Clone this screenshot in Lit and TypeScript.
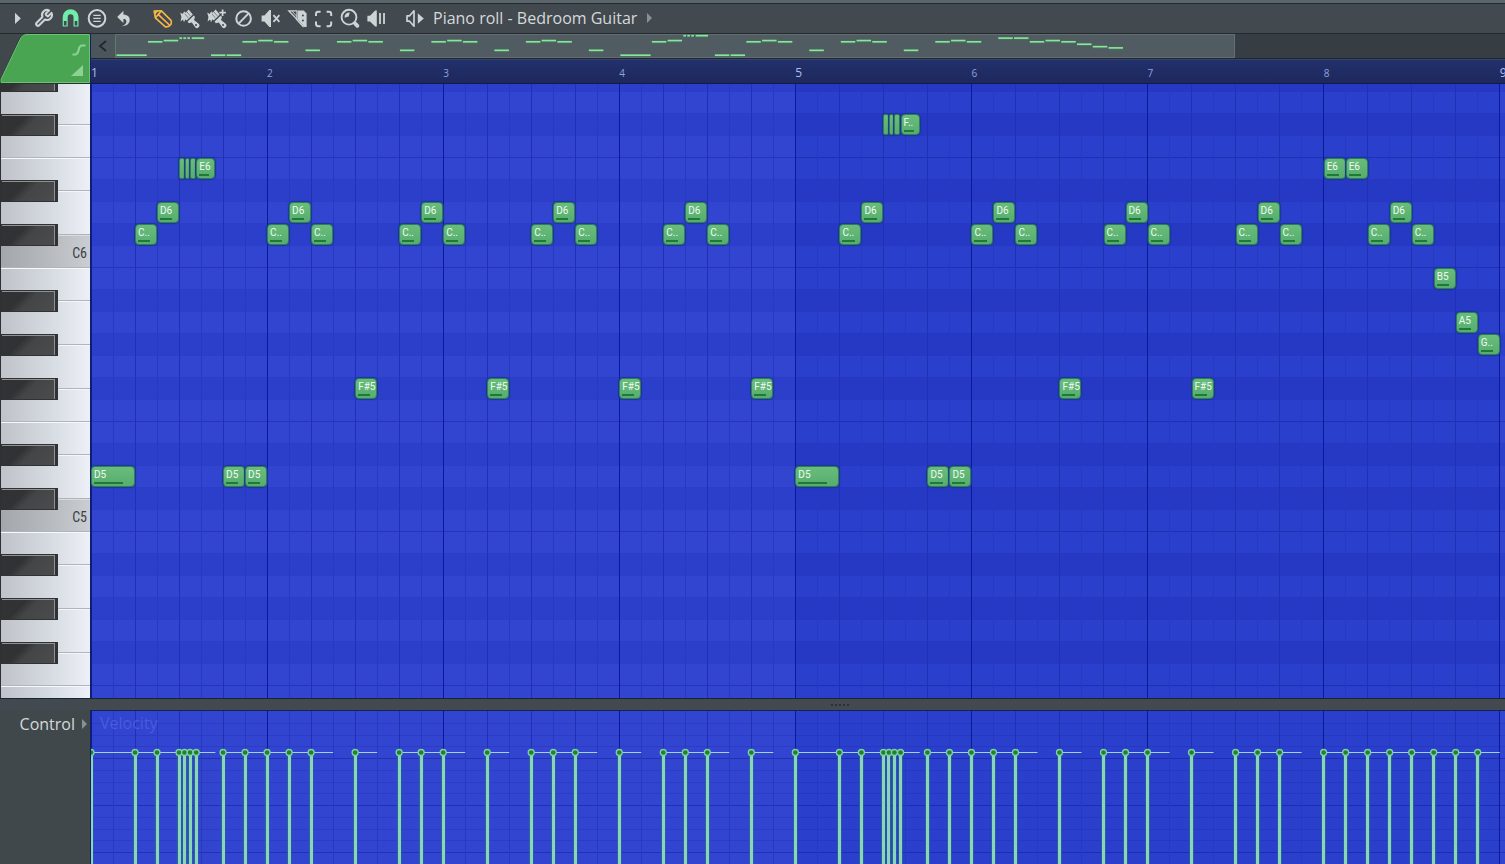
import { LitElement, html, svg, css, nothing } from "lit";
import { customElement, state } from "lit/decorators.js";

interface Note {
  pitch: number;
  at: number;
  len: number;
}

const NAMES = ["C", "C#", "D", "D#", "E", "F", "F#", "G", "G#", "A", "A#", "B"];
const BLACK = new Set([1, 3, 6, 8, 10]);
const TOP_PITCH = 80; // G#6
const BOTTOM_PITCH = 50;
const ROW = 22;
const VISIBLE_STEPS = 64.24;
const MAP_STEPS = 71;
const STEPS_PER_BAR = 8;

const P = { D5: 62, Fs5: 66, Gs5: 68, A5: 69, B5: 71, Cs6: 73, D6: 74, E6: 76, Fs6: 78 };

const n = (pitch: number, at: number, len = 1): Note => ({ pitch, at, len });
const arch = (at: number) => [n(P.Cs6, at), n(P.D6, at + 1), n(P.Cs6, at + 2)];
const strum = (pitch: number, at: number) => [
  n(pitch, at, 0.25),
  n(pitch, at + 0.25, 0.25),
  n(pitch, at + 0.5, 0.25),
  n(pitch, at + 0.78, 0.87),
];

const NOTES: Note[] = [
  n(P.D5, 0, 2), n(P.Cs6, 2), n(P.D6, 3), ...strum(P.E6, 4),
  n(P.D5, 6), n(P.D5, 7), ...arch(8), n(P.Fs5, 12), ...arch(14),
  n(P.Fs5, 18), ...arch(20), n(P.Fs5, 24), ...arch(26), n(P.Fs5, 30),
  n(P.D5, 32, 2), n(P.Cs6, 34), n(P.D6, 35), ...strum(P.Fs6, 36),
  n(P.D5, 38), n(P.D5, 39), ...arch(40), n(P.Fs5, 44), ...arch(46),
  n(P.Fs5, 50), ...arch(52), n(P.E6, 56), n(P.E6, 57), ...arch(58),
  n(P.B5, 61), n(P.A5, 62), n(P.Gs5, 63),
];

const pitchName = (p: number) => `${NAMES[p % 12]}${Math.floor(p / 12)}`;
const shortName = (p: number) => {
  const name = pitchName(p);
  return name === "F#5" || name.length < 3 ? name : `${name[0]}..`;
};
const pct = (steps: number) => `${(steps / VISIBLE_STEPS) * 100}%`;
const range = (from: number, to: number) =>
  Array.from({ length: to - from + 1 }, (_, i) => from + i);

const brush = svg`
  <path d="M4.2 5.4 L6.6 7 L8.2 4.6 L9.8 5.8 L12.6 2.6 L16.8 7.6 L10.6 13.6 L9.4 12.2 L8 15.2 L7 12.6 L4.6 14.4 L5.4 10 Z" fill="currentColor"/>
  <path d="M8.8 6.6 L12.2 10.8 M11 5 L14.2 8.8" stroke="#42494f" stroke-width=".6"/>
  <path d="M11.6 14.6 L17.8 8.6 L19 10 L18 13 L22.4 16.6 A2.5 2.5 0 0 1 19.4 20.6 L15.8 15.4 L12.8 16.2 Z" fill="currentColor"/>
  <circle cx="20" cy="18" r="1" fill="#42494f"/>`;

const ICONS = {
  play: svg`<path d="M12 5.7 L17.8 11.4 L12 17.1 Z" fill="currentColor"/>`,
  wrench: svg`<path transform="translate(3.7 1.3) scale(.83)" d="M14.7 6.3a1 1 0 0 0 0 1.4l1.6 1.6a1 1 0 0 0 1.4 0l3.77-3.77a6 6 0 0 1-7.94 7.94l-6.91 6.91a2.12 2.12 0 0 1-3-3l6.91-6.91a6 6 0 0 1 7.94-7.94l-3.76 3.76z" fill="none" stroke="currentColor" stroke-width="2.5" stroke-linejoin="round"/>`,
  magnet: svg`<path d="M8.2 14 V10.2 A5.4 5.4 0 0 1 19 10.2 V14" fill="none" stroke="currentColor" stroke-width="5"/>
    <path d="M6.3 14 V19 H10.1 V14 M17.1 14 V19 H20.9 V14" fill="none" stroke="currentColor" stroke-width="1.2"/>`,
  menu: svg`<circle cx="13" cy="11.4" r="8.3" fill="none" stroke="currentColor" stroke-width="2"/>
    <path d="M9.3 8.4H16.7M9.3 11.4H16.7M9.3 14.4H16.7" stroke="currentColor" stroke-width="1.4"/>`,
  undo: svg`<path d="M6.2 10 L12.4 3.8 V7.6 C17 7.8 19.4 10.8 18.6 14.2 C17.8 17.4 14.6 19 10.8 19.2 C14 17.8 15.6 16.2 15.4 14.2 C15.2 12.6 14 12 12.4 12.1 V16 Z" fill="currentColor"/>`,
  pencil: svg`<g fill="none" stroke="currentColor" stroke-width="1.7" stroke-linejoin="round"><path d="M5.2 4 L12.4 3.9 L22 13.4 Q23 15 21.8 17.6 Q20 20.2 16.4 19.8 L6.4 10.8 Z"/><path d="M6.4 10.8 L12.4 3.9 M9.4 7.6 L20.4 18"/></g><path d="M5 3.8 H9.6 L5.8 8 Z" fill="currentColor"/>`,
  brush,
  brushPlus: svg`${brush}<path d="M19.6 2.2V9.2M16.1 5.7H23.1" stroke="#42494f" stroke-width="3.6"/><path d="M19.6 2.4V9M16.3 5.7H22.9" stroke="currentColor" stroke-width="1.7"/>`,
  none: svg`<g fill="none" stroke="currentColor" stroke-width="2"><circle cx="13.6" cy="11.5" r="7.3"/><path d="M8.6 16.6 L18.6 6.4"/></g>`,
  mute: svg`<path d="M4.6 8.6 H7.4 L12.4 3 H14 V20 H12.4 L7.4 14.4 H4.6 Z" fill="currentColor"/><path d="M16.4 8.2 L22.4 14.8 M22.4 8.2 L16.4 14.8" stroke="currentColor" stroke-width="1.8"/>`,
  slice: svg`<path d="M4.8 3.8 H13 V12.4 Z M12 11.8 L19.6 20" fill="none" stroke="currentColor" stroke-width="1.3"/><path d="M8 4 L13 9.6" stroke="currentColor" stroke-width="1"/>
    <path d="M14 3.6 H19.8 L22.6 6.6 V20 H20.4 L14 12.8 Z" fill="currentColor"/><circle cx="18.9" cy="8.6" r="1" fill="#42494f"/><circle cx="18.9" cy="13.6" r="1" fill="#42494f"/>`,
  select: svg`<path d="M5 9 V7 Q5 4.8 7.2 4.8 H9.6 M15.6 4.8 H18 Q20.2 4.8 20.2 7 V9 M20.2 14.4 V16.8 Q20.2 19.2 18 19.2 H15.6 M9.6 19.2 H7.2 Q5 19.2 5 16.8 V14.4" fill="none" stroke="currentColor" stroke-width="2"/>`,
  zoom: svg`<circle cx="11" cy="10.2" r="7.4" fill="none" stroke="currentColor" stroke-width="1.9"/><path d="M6.6 10.8 A4.8 4.8 0 0 1 11.8 5.4 L10.6 9.6 Z" fill="currentColor"/><path d="M17 16.4 L19.4 18.8" stroke="currentColor" stroke-width="3.8" stroke-linecap="round"/>`,
  playback: svg`<path d="M2.4 8.8 H5 L10.2 3.6 H11.8 V19.6 H10.2 L5 14.4 H2.4 Z" fill="currentColor"/><path d="M15 6 V17 M19 6 V17" stroke="currentColor" stroke-width="1.8"/>`,
  target: svg`<path d="M6 8.8 H8.6 L13 3.8 V19.2 L8.6 14.2 H6 Z" fill="none" stroke="currentColor" stroke-width="1.7" stroke-linejoin="round"/><path d="M16.8 6.2 L22.8 11.5 L16.8 16.8 Z" fill="currentColor"/>`,
};

type IconName = keyof typeof ICONS;

const MENU_TOOLS: [IconName, string][] = [
  ["play", "Piano roll options"], ["wrench", "Tools"], ["magnet", "Snap"],
  ["menu", "Stamp"], ["undo", "Undo"],
];
const EDIT_TOOLS: [IconName, string][] = [
  ["pencil", "Draw"], ["brush", "Paint"], ["brushPlus", "Paint in drum mode"],
  ["none", "Delete"], ["mute", "Mute"], ["slice", "Slice"],
  ["select", "Select"], ["zoom", "Zoom"], ["playback", "Playback"],
];

@customElement("tool-bar")
class ToolBar extends LitElement {
  @state() private active: IconName = "pencil";

  static styles = css`
    :host {
      display: flex;
      align-items: center;
      height: 29px;
      padding-left: 3px;
      background: #42494f;
      border-top: 1px solid #24292e;
      border-bottom: 1px solid #24292e;
      color: #ced3d6;
    }
    .group { display: flex; }
    .edit { margin: 0 9px 0 11px; }
    button {
      display: flex;
      align-items: center;
      border: 0;
      padding: 0;
      background: none;
      color: inherit;
      font: 16px/22px "Open Sans", "Noto Sans", sans-serif;
    }
    .on { color: #f6b549; }
    .snap { color: #70eda9; }
    .title { margin-left: 5px; padding-bottom: 2px; gap: 9px; color: #d5d9db; white-space: nowrap; }
    .arrow { color: #8a9195; }
  `;

  private tool([icon, label]: [IconName, string], group: string) {
    const cls = icon === "magnet" ? "snap" : group === "edit" && icon === this.active ? "on" : "";
    return html`<button class=${cls} aria-label=${label} @click=${() => group === "edit" && (this.active = icon)}>
      <svg width="27" height="23" viewBox="0 0 27 23">${ICONS[icon]}</svg>
    </button>`;
  }

  render() {
    return html`
      <div class="group">${MENU_TOOLS.map((t) => this.tool(t, "menu"))}</div>
      <div class="group edit">${EDIT_TOOLS.map((t) => this.tool(t, "edit"))}</div>
      ${this.tool(["target", "Target channel"], "menu")}
      <button class="title">
        Piano roll - Bedroom Guitar
        <svg class="arrow" width="8" height="10" viewBox="0 0 8 10"><path d="M1 0 L6 5 L1 10 Z" fill="currentColor"/></svg>
      </button>`;
  }
}

@customElement("mini-map")
class MiniMap extends LitElement {
  static styles = css`
    :host {
      display: flex;
      height: 24px;
      background: #363e43;
      border-bottom: 1px solid #20262d;
    }
    button {
      width: 24px;
      padding: 0;
      border: 0;
      background: #4a555c;
      color: #20282e;
    }
    button svg { display: block; margin: 0 auto; }
    .view {
      flex: 1118;
      box-sizing: border-box;
      border: 1px solid #626e74;
      border-left-color: #5d7c61;
      background: #505c62;
    }
    .rest { flex: 270; }
    .notes { display: block; width: 100%; height: 22px; overflow: visible; }
  `;

  render() {
    return html`
      <button aria-label="Scroll left">
        <svg width="10" height="12" viewBox="0 0 10 12"><path d="M8 1 L2 6 L8 11" fill="none" stroke="currentColor" stroke-width="1.8"/></svg>
      </button>
      <div class="view">
        <svg class="notes" preserveAspectRatio="none" viewBox="0 0 ${MAP_STEPS} 22">
          ${NOTES.map((note) => {
            const y = 20 - (note.pitch - P.D5) * 1.22;
            return svg`<rect x=${note.at + 0.03} y=${y - 1} width=${note.len - 0.08} height="3" fill="#45805a" opacity=".6"></rect>
              <rect x=${note.at + 0.03} y=${y - 0.6} width=${note.len - 0.08} height="1.6" fill="#8ae69c"></rect>`;
          })}
        </svg>
      </div>
      <div class="rest"></div>`;
  }
}

@customElement("bar-ruler")
class BarRuler extends LitElement {
  static styles = css`
    :host {
      display: block;
      position: relative;
      overflow: hidden;
      height: 23px;
      background: linear-gradient(#22306c, #1d285c);
      border-top: 1px solid #36426b;
      border-bottom: 1px solid #141b45;
      font: 10px/12px "Open Sans", "Noto Sans", sans-serif;
      color: #93a0dc;
    }
    .num { position: absolute; top: 7px; }
    .major { font-size: 12px; color: #b1bcf0; }
  `;

  render() {
    return range(0, 8).map(
      (bar) => html`<span class="num ${bar % 4 ? "" : "major"}" style="left:${pct(bar * STEPS_PER_BAR)}">${bar + 1}</span>`,
    );
  }
}

const verticals = () => svg`
  <rect x=${pct(32)} y="0" width=${pct(32)} height="100%" fill="#0018a0" opacity=".13"></rect>
  ${range(0, 64).map((s) => {
    const color = s % STEPS_PER_BAR === 0 ? "#0a1a98" : s % 2 === 0 ? "#2230b4" : "#2938c0";
    return svg`<line x1=${pct(s)} x2=${pct(s)} y1="0" y2="100%" stroke=${color}></line>`;
  })}`;

@customElement("piano-keys")
class PianoKeys extends LitElement {
  static styles = css`
    :host {
      display: block;
      overflow: hidden;
      border-left: 1px solid #2b3137;
      background: linear-gradient(90deg, #bfc2c9, #d6dae1 55%, #edf0f7);
    }
    .keys { margin-top: -14px; }
    .key {
      display: flex;
      box-sizing: border-box;
      width: 100%;
      height: 22px;
      padding: 0;
      border: 0;
      background: none;
      font: 14px/14px "Liberation Sans Narrow", "Roboto Condensed", Roboto, sans-serif;
      color: #3c3f44;
    }
    .white { justify-content: flex-end; align-items: flex-start; padding-right: 3px; }
    .edge { border-bottom: 1px solid #b0b4bb; box-shadow: 0 1px #f7f8fb; }
    .c { background: linear-gradient(90deg, #a3a6ab, #b5b8bc 50%, #cacdd2); }
    .cap {
      box-sizing: border-box;
      width: 57px;
      height: 22px;
      border: solid #303234;
      border-width: 1px 3px 1px 1px;
      background: linear-gradient(135deg, #303233 35%, #434546 52%, #4a4c4d);
      box-shadow: inset -1px 1px #8d9193;
    }
    .side { flex: 1; display: flex; flex-direction: column; }
    .upper { height: 10px; border-bottom: 1px solid #b0b4bb; }
    .lower { flex: 1; border-top: 1px solid #f4f6fa; }
    .tonic .lower { background: linear-gradient(90deg, #babdc1, #cacdd2); border-top-color: #d8dbe0; }
  `;

  render() {
    return html`<div class="keys">
      ${range(BOTTOM_PITCH, TOP_PITCH).reverse().map((p) => {
        const k = p % 12;
        if (BLACK.has(k)) {
          return html`<button class="key ${k === 1 ? "tonic" : ""}" aria-label=${pitchName(p)}>
            <span class="cap"></span>
            <span class="side"><span class="upper"></span><span class="lower"></span></span>
          </button>`;
        }
        return html`<button class="key white ${k === 0 ? "c edge" : k === 5 ? "edge" : ""}" aria-label=${pitchName(p)}>
          ${k === 0 ? pitchName(p) : nothing}
        </button>`;
      })}
    </div>`;
  }
}

@customElement("note-grid")
class NoteGrid extends LitElement {
  static styles = css`
    :host { display: block; overflow: hidden; background: #3145d1; }
    .sheet { position: relative; margin-top: -14px; }
    .row { box-sizing: border-box; height: 22px; border-bottom: 1px solid #2c3dc8; }
    .row.dark { background: #2c3fca; }
    .row.octave { border-bottom-color: #2534b8; }
    .lines { position: absolute; inset: 0; width: 100%; height: 100%; shape-rendering: crispEdges; }
    .note {
      position: absolute;
      box-sizing: border-box;
      height: 21px;
      padding: 2px 2px 2px;
      display: flex;
      flex-direction: column;
      justify-content: space-between;
      border: 1px solid #2f7c60;
      border-radius: 4px;
      background: linear-gradient(#68bd7c, #57ad6e);
      box-shadow: 0 0 1px 1px #1c3a8c;
      font: 10px/11px Roboto, sans-serif;
      color: #f0faf2;
      white-space: nowrap;
    }
    .sliver { padding: 0; border-radius: 2px; }
    .level { width: 76%; height: 2px; background: #1f7a35; }
  `;

  render() {
    return html`<div class="sheet">
      ${range(BOTTOM_PITCH, TOP_PITCH).reverse().map((p) => {
        const k = p % 12;
        return html`<div class="row ${BLACK.has(k) ? "dark" : ""} ${k === 0 || k === 5 ? "octave" : ""}"></div>`;
      })}
      <svg class="lines">${verticals()}</svg>
      ${NOTES.map((note) => {
        const sliver = note.len < 0.5;
        return html`<div class="note ${sliver ? "sliver" : ""}"
          style="left:${pct(note.at)};width:${pct(note.len)};top:${(TOP_PITCH - note.pitch) * ROW}px">
          ${sliver ? nothing : html`<span>${shortName(note.pitch)}</span><span class="level"></span>`}
        </div>`;
      })}
    </div>`;
  }
}

@customElement("velocity-lane")
class VelocityLane extends LitElement {
  static styles = css`
    :host { display: block; position: relative; overflow: hidden; background: #3145d1; }
    svg { position: absolute; inset: 0; width: 100%; height: 100%; }
    .grid, .stem { shape-rendering: crispEdges; }
    .name {
      position: relative;
      display: block;
      padding: 2px 9px;
      font: 16px/20px "Open Sans", "Noto Sans", sans-serif;
      color: #4a5bdc;
    }
  `;

  render() {
    return html`
      <svg class="grid">
        ${range(1, 40).map((i) => {
          const y = Math.round(i * 11.75);
          return svg`<line x1="0" x2="100%" y1=${y} y2=${y} stroke=${i % 4 ? "#2c3cc6" : "#2230b4"}></line>`;
        })}
        ${verticals()}
      </svg>
      <span class="name">Velocity</span>
      <svg>
        ${NOTES.map((note) => svg`
          <line x1=${pct(note.at)} x2=${pct(note.at + note.len)} y1="41.5" y2="41.5" stroke="#9fd2e2"></line>
          <line x1=${pct(note.at)} x2=${pct(note.at)} y1="45" y2="100%" stroke="#2a6a92" stroke-width="5" opacity=".7"></line>
          <line class="stem" x1=${pct(note.at)} x2=${pct(note.at)} y1="45" y2="100%" stroke="#8ad5ba" stroke-width="3"></line>`)}
        ${NOTES.map((note) => svg`<circle cx=${pct(note.at)} cy="41.5" r="3" fill="#1f8231" stroke="#7fd0a0" stroke-width="1.3"></circle>`)}
      </svg>`;
  }
}

@customElement("app-root")
class AppRoot extends LitElement {
  static styles = css`
    :host {
      display: flex;
      flex-direction: column;
      height: 100vh;
      overflow: hidden;
      background: #40484b;
    }
    .strip { height: 3px; background: #5b656c; }
    .head, .roll, .control { display: grid; grid-template-columns: 90px minmax(0, 1fr); }
    .right { border-left: 1px solid #14205c; }
    .corner { display: block; }
    .roll { flex: 1; min-height: 0; }
    .splitter {
      display: flex;
      justify-content: center;
      align-items: center;
      gap: 2px;
      height: 11px;
      padding-left: 175px;
      background: #434a4f;
      border-top: 1px solid #1c2431;
    }
    .dot { width: 2px; height: 2px; background: #2b3136; }
    .control { height: 154px; }
    .control .right { border-top: 1px solid #14205c; }
    .pick {
      display: flex;
      align-items: center;
      align-self: start;
      justify-content: flex-end;
      gap: 7px;
      padding: 4px 2px 0 0;
      border: 0;
      background: none;
      font: 16px/20px "Open Sans", "Noto Sans", sans-serif;
      color: #d5d9db;
    }
  `;

  render() {
    return html`
      <div class="strip"></div>
      <tool-bar></tool-bar>
      <div class="head">
        <svg class="corner" width="90" height="50" viewBox="0 0 90 50">
          <path d="M0 50 V46 L19 5 Q21.5 0 27 0 H90 V50 Z" fill="#28322f"/>
          <path d="M1 48.5 V45.5 L20 5.5 Q22 .5 27 .5 H89.5 V48.5 Z" fill="#4aa552" stroke="#6cc276"/>
          <path d="M72.500 20.5 H75 Q77.500 20.5 78.500 16.500 Q79.500 11.5 82 11.5 H85.5" fill="none" stroke="#8fd093" stroke-width="2.2"/>
          <path d="M71 42 L83 31 V42 Z" fill="#8fd093"/>
        </svg>
        <div class="right">
          <mini-map></mini-map>
          <bar-ruler></bar-ruler>
        </div>
      </div>
      <div class="roll">
        <piano-keys></piano-keys>
        <note-grid class="right"></note-grid>
      </div>
      <div class="splitter">${range(1, 5).map(() => html`<span class="dot"></span>`)}</div>
      <div class="control">
        <button class="pick">
          Control
          <svg width="6" height="10" viewBox="0 0 6 10"><path d="M0 0 L5 5 L0 10 Z" fill="#8a9195"/></svg>
        </button>
        <velocity-lane class="right"></velocity-lane>
      </div>`;
  }
}
